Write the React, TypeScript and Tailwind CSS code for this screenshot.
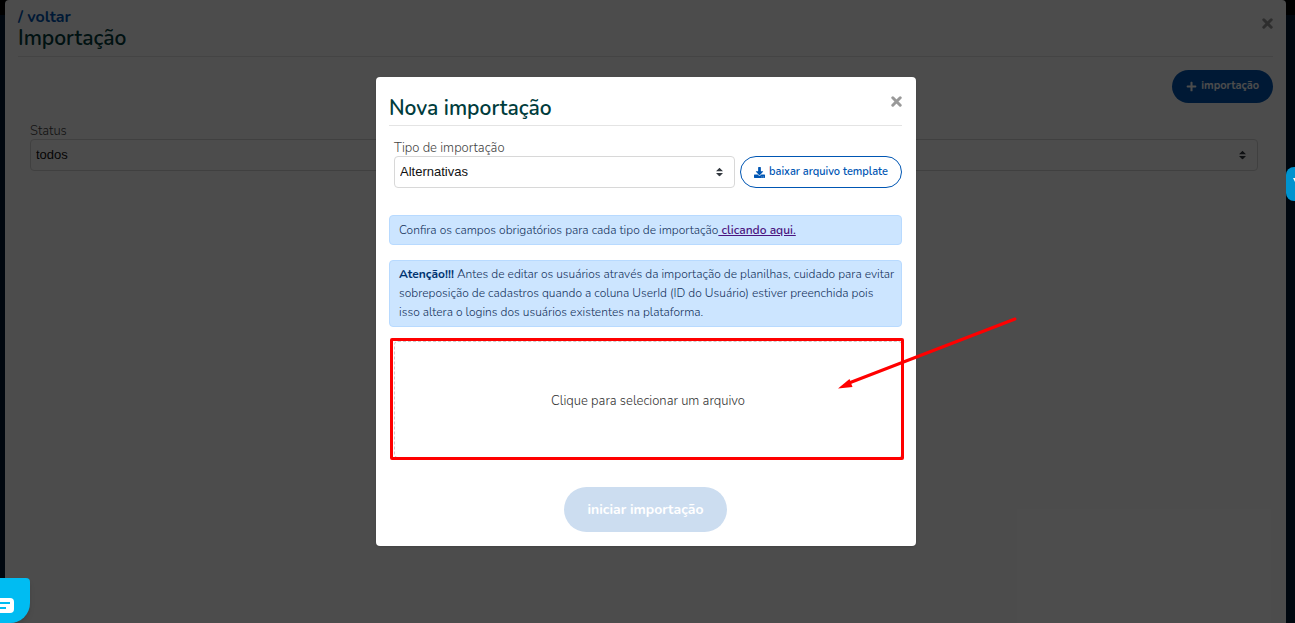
import React, { useState } from 'react';
import { FaDownload, FaPlus } from 'react-icons/fa';

const STATUS = ['todos', 'pendente', 'processando', 'concluído', 'erro'];
const TIPOS = ['Alternativas', 'Perguntas', 'Usuários', 'Turmas'];

type SelectProps = {
  id: string;
  label: string;
  options: string[];
  value: string;
  onChange: (value: string) => void;
};

function SelectField({ id, label, options, value, onChange }: SelectProps) {
  return (
    <div className="min-w-0 flex-1">
      <label htmlFor={id} className="block text-[13px] leading-4 font-light text-[#444]">{label}</label>
      <div className="relative">
        <select
          id={id}
          value={value}
          onChange={e => onChange(e.target.value)}
          className="block h-8 w-full appearance-none rounded border border-[#d8d8d8] bg-white px-[5px] font-['Liberation_Sans',sans-serif] text-[13px] text-[#111]"
        >
          {options.map(o => (
            <option key={o}>{o}</option>
          ))}
        </select>
        <svg viewBox="0 0 4 5" className="pointer-events-none absolute top-1/2 right-3 h-[9px] w-[7px] -translate-y-1/2 fill-[#343a40]" aria-hidden="true">
          <path d="M2 0L0 2h4zm0 5L0 3h4z" />
        </svg>
      </div>
    </div>
  );
}

function CloseIcon() {
  return (
    <svg viewBox="0 0 11 11" className="size-[11px]" aria-hidden="true">
      <path d="M1.800 1.800L9.200 9.200M9.200 1.800L1.800 9.200" stroke="currentColor" strokeWidth="3" strokeLinecap="round" />
    </svg>
  );
}

export default function App() {
  const [status, setStatus] = useState('todos');
  const [tipo, setTipo] = useState('Alternativas');
  const [arquivo, setArquivo] = useState('');

  return (
    <div className="relative min-h-screen overflow-hidden bg-[#001a33] bg-linear-to-b from-black from-[15px] to-[#001a33] to-[15px] font-[Nunito,Lato,sans-serif]">

      {/* PÁGINA */}
      <main className="mr-[9px] ml-[5px] min-h-screen rounded-t bg-white px-[13px] pt-2">
        <header className="flex items-start justify-between border-b border-[#e4e4e4] pb-[5px]">
          <div>
            <a href="#voltar" className="block text-base leading-[18px] font-bold text-[#0056b3]">/ voltar</a>
            <h1 className="text-[21px] leading-[25px] font-semibold text-[#003c3c]">Importação</h1>
          </div>
          <button type="button" aria-label="Fechar" className="mt-[10px] text-[#999]">
            <CloseIcon />
          </button>
        </header>

        <div className="mt-[13px] flex justify-end">
          <button type="button" className="flex h-[33px] items-center gap-1 rounded-full bg-[#0056b3] px-[14px] pb-px text-[11px] font-bold text-white">
            <FaPlus className="size-[11px]" />
            importação
          </button>
        </div>

        <div className="mt-5 flex pr-[15px] pl-3">
          <SelectField id="status" label="Status" options={STATUS} value={status} onChange={setStatus} />
        </div>
      </main>

      <div className="absolute inset-0 bg-black/70"></div>

      {/* MODAL */}
      <div className="absolute inset-0 flex items-start justify-center pt-[77px] pr-[3px]">
        <section role="dialog" aria-labelledby="titulo" className="w-full max-w-[540px] rounded bg-white pt-[19px] pr-[14px] pb-[14px] pl-[13px] shadow">
          <header className="flex items-start justify-between border-b border-[#e4e4e4] pb-1">
            <h2 id="titulo" className="text-[21px] leading-[25px] font-semibold text-[#003c3c]">Nova importação</h2>
            <button type="button" aria-label="Fechar" className="text-[#999]">
              <CloseIcon />
            </button>
          </header>

          <div className="mt-[14px] flex items-end gap-[5px] pl-[5px]">
            <SelectField id="tipo" label="Tipo de importação" options={TIPOS} value={tipo} onChange={setTipo} />
            <button type="button" className="flex h-8 items-center gap-1 rounded-full border border-[#0056b3] px-[13px] text-[11px] font-semibold text-[#0056b3]">
              <FaDownload className="size-[11px]" />
              baixar arquivo template
            </button>
          </div>

          <p className="mt-[27px] rounded border border-[#b8daff] bg-[#cce5ff] pr-1 pl-[9px] py-[5px] text-xs leading-[18px] font-light text-[#14325c]">
            Confira os campos obrigatórios para cada tipo de importação
            <a href="#campos" className="font-semibold text-[#4b1580] underline"> clicando aqui.</a>
          </p>

          <p className="mt-[15px] rounded border border-[#b8daff] bg-[#cce5ff] pr-1 pl-[9px] py-1 text-xs leading-[19px] font-light text-[#14325c]">
            <strong className="font-bold text-[#003370]">Atenção!!!</strong> Antes de editar os usuários através da importação de planilhas, cuidado para evitar
            sobreposição de cadastros quando a coluna UserId (ID do Usuário) estiver preenchida pois
            isso altera o logins dos usuários existentes na plataforma.
          </p>

          <div className="relative mt-[11px] h-[122px] pt-[3px] pl-[5px]">
            <label htmlFor="arquivo" className="flex h-[117px] cursor-pointer items-center justify-center rounded border border-dashed border-[#ccc] pt-1 text-[13px] font-light text-[#333]">
              {arquivo || 'Clique para selecionar um arquivo'}
            </label>
            <input id="arquivo" type="file" className="sr-only" onChange={e => setArquivo(e.target.files?.[0]?.name || '')} />

            {/* destaque */}
            <div className="pointer-events-none absolute inset-y-0 -right-0.5 left-px rounded-xs border-3 border-[#f00]"></div>
            <svg viewBox="0 0 180 72" className="pointer-events-none absolute -top-[21px] -right-[115px] h-[72px] w-[180px]" aria-hidden="true">
              <path d="M178 2L12 66" stroke="#f00" strokeWidth="3" strokeLinecap="round" />
              <path d="M1 71.500L12.500 62L15.500 70Z" fill="#f00" />
            </svg>
          </div>

          <div className="mt-[27px] flex justify-center">
            <button type="button" disabled className="h-[45px] rounded-full bg-[#ccddf0] px-[23px] text-sm font-bold text-white">
              iniciar importação
            </button>
          </div>
        </section>
      </div>

      {/* CHAT */}
      <button type="button" aria-label="Abrir chat" className="absolute bottom-0 left-0 h-[45px] w-[30px] rounded-tr rounded-br-[20px] bg-[#00bcf2] shadow-md">
        <svg viewBox="0 0 30 45" className="h-[45px] w-[30px]" aria-hidden="true">
          <path d="M0 20H10Q14 20 14 24V31Q14 35 10 35H0Z" fill="#fff" />
          <path d="M0 25H10M0 30H6" stroke="#00bcf2" strokeWidth="2" />
        </svg>
      </button>
      <button type="button" aria-label="Acessibilidade" className="absolute top-[167px] right-0 h-[34px] w-[9px] rounded-l-lg bg-[#0093cf]">
        <svg viewBox="0 0 9 34" className="h-[34px] w-[9px]" aria-hidden="true">
          <path d="M7 11L9 15V11Z" fill="#fff" />
        </svg>
      </button>
    </div>
  );
}
